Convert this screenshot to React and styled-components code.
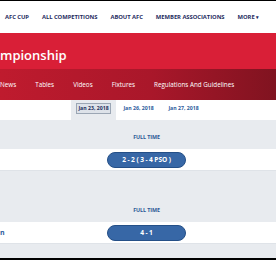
import React from 'react';
import styled, { createGlobalStyle } from "styled-components";

const GlobalStyle = createGlobalStyle`
    html, body {
        margin: 0;
        padding: 0;
        background: #000;
    }
    body {
        font-family: 'Open Sans', 'Liberation Sans', sans-serif;
    }
`

const topLinks = ['AFC Cup', 'All Competitions', 'About AFC', 'Member Associations'];
const subLinks = ['News', 'Tables', 'Videos', 'Fixtures', 'Regulations And Guidelines'];
const dates = ['Jan 23, 2018', 'Jan 26, 2018', 'Jan 27, 2018'];
const matches = [
    { score: '2 - 2 ( 3 - 4 PSO )', team: '', spaced: false },
    { score: '4 - 1', team: 'n', spaced: true },
];

function App() {
  return (
    <Page>
        <GlobalStyle />
        <TopNav>
            {topLinks.map((l) => <TopLink key={l}>{l}</TopLink>)}
            <TopLink>More <Caret>▾</Caret></TopLink>
        </TopNav>
        <Hero>
            <Title>mpionship</Title>
        </Hero>
        <SubNav>
            {subLinks.map((l) => <SubLink key={l}>{l}</SubLink>)}
        </SubNav>
        <DateBar>
            {dates.map((d, i) => (
                <DateTab key={d} $active={i === 0}>
                    <DateLabel $active={i === 0}>{d}</DateLabel>
                </DateTab>
            ))}
        </DateBar>
        <Content>
            {matches.map((m) => (
                <Match key={m.score}>
                    <StatusRow $spaced={m.spaced}>
                        <Status>Full Time</Status>
                    </StatusRow>
                    <ScoreRow>
                        <Team>{m.team}</Team>
                        <Score>{m.score}</Score>
                    </ScoreRow>
                </Match>
            ))}
        </Content>
    </Page>
  );
}

const Page = styled.div`
    width: 276px;
    height: 260px;
    box-sizing: border-box;
    border-top: 1px solid #000;
    border-bottom: 2px solid #000;
    background: #e8ebef;
    overflow: hidden;
    display: flex;
    flex-direction: column;
`
const TopNav = styled.nav`
    height: 32px;
    flex: none;
    background: #fff;
    display: flex;
    align-items: center;
    gap: 13px;
    padding-left: 5px;
`
const TopLink = styled.a`
    font-size: 5.85px;
    font-weight: 700;
    text-transform: uppercase;
    letter-spacing: -0.05px;
    color: #1f2d5f;
    white-space: nowrap;
`
const Caret = styled.span`
    font-size: 5px;
`
const Hero = styled.header`
    height: 36px;
    flex: none;
    background: #d91f37;
    display: flex;
    align-items: flex-end;
    padding-bottom: 7px;
    box-sizing: border-box;
`
const Title = styled.h1`
    margin: 0;
    font-size: 13px;
    font-weight: 600;
    color: #fff;
    line-height: 1;
`
const SubNav = styled.nav`
    height: 31px;
    flex: none;
    background: linear-gradient(90deg, #bf1b2e 0%, #a9172a 55%, #801320 100%);
    display: flex;
    align-items: center;
    gap: 19px;
`
const SubLink = styled.a`
    font-size: 6.3px;
    color: #fff;
    white-space: nowrap;
`
const DateBar = styled.div`
    height: 20px;
    flex: none;
    background: #fff;
    display: flex;
    padding-left: 71px;
`
const DateTab = styled.div`
    width: 45px;
    display: flex;
    align-items: flex-start;
    justify-content: center;
    padding-top: 3px;
    box-sizing: border-box;
    background: ${(p) => (p.$active ? '#e8ebef' : 'transparent')};
`
const DateLabel = styled.span`
    font-size: 5.2px;
    font-weight: 700;
    line-height: 9px;
    padding: 0 1px;
    white-space: nowrap;
    color: ${(p) => (p.$active ? '#1d2f5c' : '#2c5c9c')};
    border: 1px solid ${(p) => (p.$active ? '#9ba6b4' : 'transparent')};
    background: ${(p) => (p.$active ? '#dde2e9' : 'transparent')};
`
const Content = styled.main`
    flex: 1;
    background: #e8ebef;
`
const Match = styled.section`
    display: flex;
    flex-direction: column;
`
const StatusRow = styled.div`
    height: ${(p) => (p.$spaced ? '51px' : '29px')};
    display: grid;
    grid-template-columns: 107px 79px 1fr;
    align-items: end;
    padding-bottom: 8px;
    box-sizing: border-box;
`
const Status = styled.span`
    grid-column: 2;
    text-align: center;
    font-size: 5.4px;
    font-weight: 700;
    text-transform: uppercase;
    color: #2d5a96;
    letter-spacing: -0.1px;
`
const ScoreRow = styled.div`
    height: 22px;
    background: #fff;
    border-bottom: 1px solid #dfe3e8;
    box-sizing: border-box;
    display: grid;
    grid-template-columns: 107px 79px 1fr;
    align-items: center;
`
const Team = styled.span`
    font-size: 7px;
    font-weight: 700;
    color: #2c5c9c;
`
const Score = styled.span`
    height: 16px;
    border-radius: 8px;
    background: #3767a6;
    border: 1px solid #244f87;
    box-sizing: border-box;
    display: flex;
    align-items: center;
    justify-content: center;
    color: #fff;
    font-size: 6.6px;
    font-weight: 700;
    letter-spacing: -0.1px;
    white-space: nowrap;
`

export default App;
